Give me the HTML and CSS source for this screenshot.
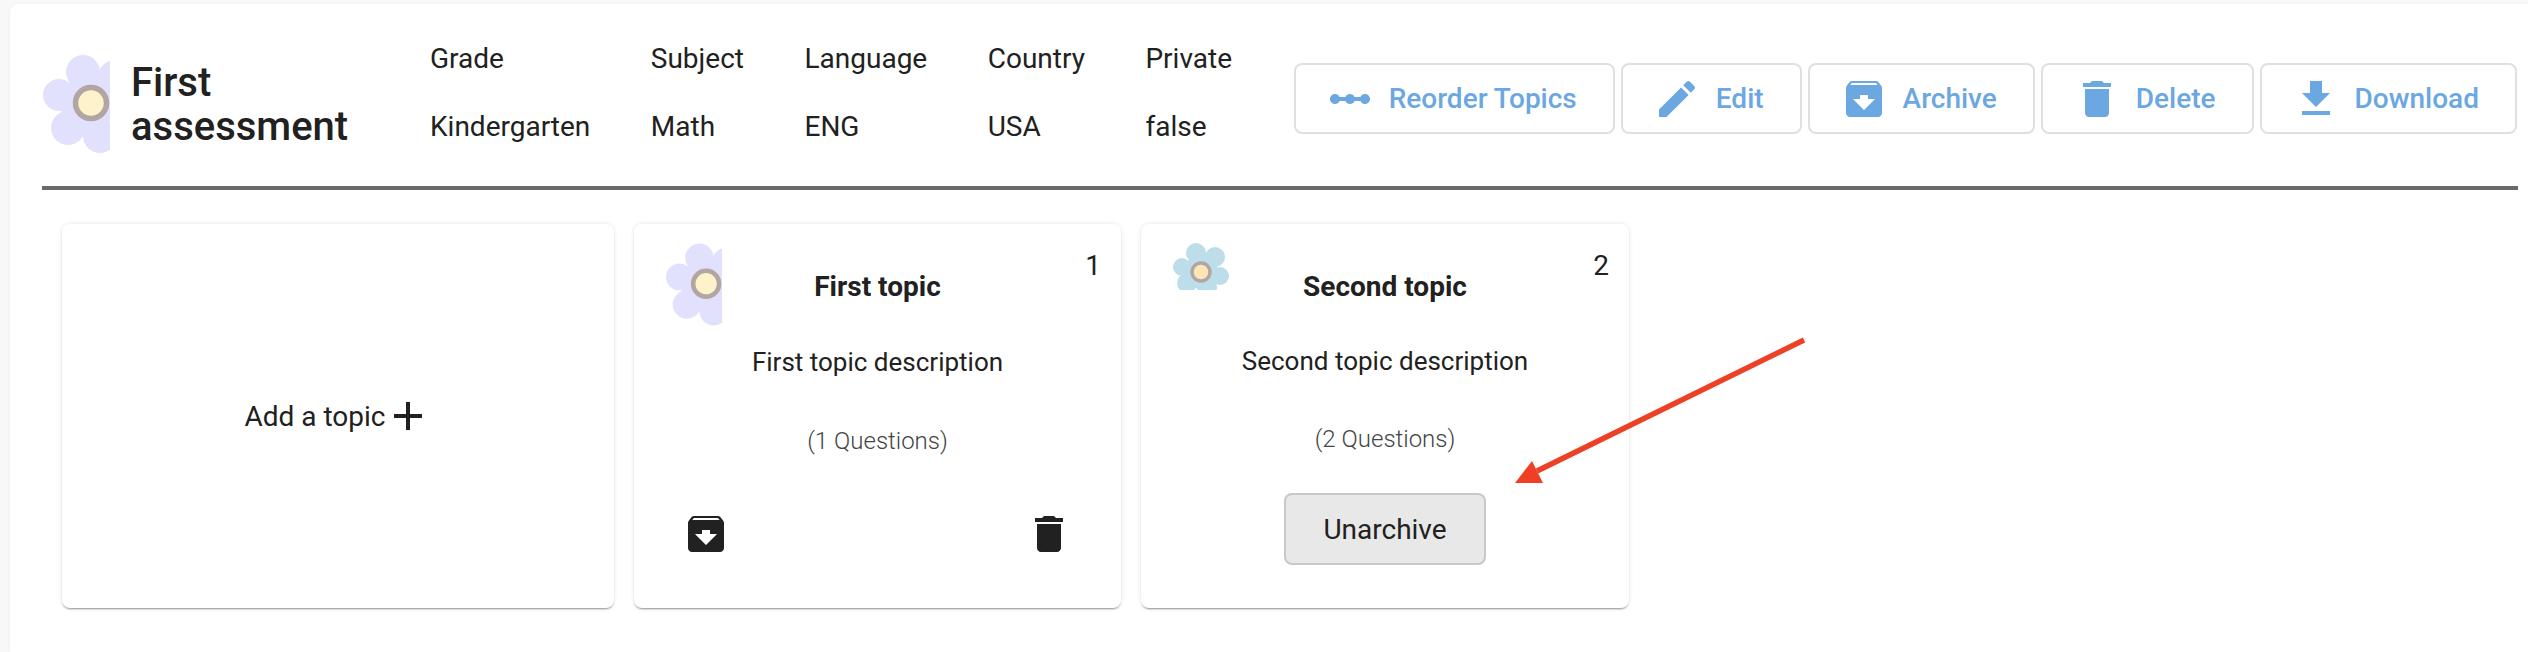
FILE: index.html
```html
<!DOCTYPE html>
<html lang="en">
<head>
    <meta charset="UTF-8">
    <title>First assessment</title>
    <link rel="stylesheet" href="styles.css">
</head>
<body>

    <svg class="sprites" width="0" height="0">
        <symbol id="flowerLilac" viewBox="0 0 67 98">
            <g fill="#e1e1fd">
                <circle cx="40" cy="17" r="17"/>
                <circle cx="16" cy="40" r="16"/>
                <circle cx="25" cy="73" r="17"/>
                <circle cx="57" cy="81" r="17"/>
                <circle cx="72" cy="22" r="17"/>
                <circle cx="45" cy="48" r="28"/>
            </g>
            <circle cx="48" cy="48" r="15.5" fill="#fdf2c9" stroke="#b1a6a2" stroke-width="5.5"/>
        </symbol>
    </svg>

    <div class="panel">
        <header class="header">
            <svg class="flower-big"><use href="#flowerLilac"/></svg>
            <h1 class="title">First assessment</h1>
            <div class="meta">
                <span>Grade</span><span>Subject</span><span>Language</span><span>Country</span><span>Private</span>
                <span>Kindergarten</span><span>Math</span><span>ENG</span><span>USA</span><span>false</span>
            </div>
            <div class="actions">
                <button class="btn">
                    <svg class="icon" viewBox="0 0 24 24"><path d="M19.5 9.5c-1.03 0-1.9.62-2.29 1.5h-2.92c-.39-.88-1.26-1.5-2.29-1.5s-1.9.62-2.29 1.5H6.79c-.39-.88-1.26-1.5-2.29-1.5C3.12 9.5 2 10.62 2 12s1.12 2.5 2.5 2.5c1.03 0 1.9-.62 2.29-1.5h2.92c.39.88 1.26 1.5 2.29 1.5s1.9-.62 2.29-1.5h2.92c.39.88 1.26 1.5 2.29 1.5 1.38 0 2.5-1.12 2.5-2.5s-1.12-2.5-2.5-2.5z"/></svg>
                    Reorder Topics
                </button>
                <button class="btn">
                    <svg class="icon" viewBox="0 0 24 24"><path d="M3 17.25V21h3.75L17.81 9.94l-3.75-3.75L3 17.25zM20.71 7.04c.39-.39.39-1.02 0-1.41l-2.34-2.34c-.39-.39-1.02-.39-1.41 0l-1.83 1.83 3.75 3.75 1.83-1.83z"/></svg>
                    Edit
                </button>
                <button class="btn">
                    <svg class="icon" viewBox="0 0 24 24"><path d="M20.54 5.23l-1.39-1.68C18.88 3.21 18.47 3 18 3H6c-.47 0-.88.21-1.16.55L3.46 5.23C3.17 5.57 3 6.02 3 6.5V19c0 1.1.9 2 2 2h14c1.1 0 2-.9 2-2V6.5c0-.48-.17-.93-.46-1.27zM12 17.5L6.5 12H10v-2h4v2h3.5L12 17.5zM5.12 5l.81-1h12l.94 1H5.12z"/></svg>
                    Archive
                </button>
                <button class="btn">
                    <svg class="icon" viewBox="0 0 24 24"><path d="M6 19c0 1.1.9 2 2 2h8c1.1 0 2-.9 2-2V7H6v12zM19 4h-3.5l-1-1h-5l-1 1H5v2h14V4z"/></svg>
                    Delete
                </button>
                <button class="btn">
                    <svg class="icon" viewBox="0 0 24 24"><path d="M19 9h-4V3H9v6H5l7 7 7-7zM5 18v2h14v-2H5z"/></svg>
                    Download
                </button>
            </div>
        </header>

        <div class="topics">
            <div class="card card-add">
                Add a topic
                <svg class="icon" viewBox="0 0 24 24"><path d="M19 13h-6v6h-2v-6H5v-2h6V5h2v6h6v2z"/></svg>
            </div>

            <div class="card">
                <svg class="flower-small"><use href="#flowerLilac"/></svg>
                <span class="card-number">1</span>
                <h2 class="card-title">First topic</h2>
                <p class="card-desc">First topic description</p>
                <p class="card-count">(1 Questions)</p>
                <div class="card-icons">
                    <svg class="icon" viewBox="0 0 24 24"><path d="M20.54 5.23l-1.39-1.68C18.88 3.21 18.47 3 18 3H6c-.47 0-.88.21-1.16.55L3.46 5.23C3.17 5.57 3 6.02 3 6.5V19c0 1.1.9 2 2 2h14c1.1 0 2-.9 2-2V6.5c0-.48-.17-.93-.46-1.27zM12 17.5L6.5 12H10v-2h4v2h3.5L12 17.5zM5.12 5l.81-1h12l.94 1H5.12z"/></svg>
                    <svg class="icon" viewBox="0 0 24 24"><path d="M6 19c0 1.1.9 2 2 2h8c1.1 0 2-.9 2-2V7H6v12zM19 4h-3.5l-1-1h-5l-1 1H5v2h14V4z"/></svg>
                </div>
            </div>

            <div class="card card-archived">
                <svg class="flower-blue" viewBox="0 0 56 47">
                    <g fill="#bcdde9">
                        <circle cx="23" cy="10" r="10"/>
                        <circle cx="9" cy="24" r="9"/>
                        <circle cx="42" cy="14" r="10"/>
                        <circle cx="47" cy="33" r="9"/>
                        <circle cx="14" cy="40" r="10"/>
                        <circle cx="34" cy="44" r="10"/>
                        <circle cx="28" cy="29" r="17"/>
                    </g>
                    <circle cx="28" cy="29" r="9" fill="#fce6b8" stroke="#b1a6a2" stroke-width="3.5"/>
                </svg>
                <span class="card-number">2</span>
                <h2 class="card-title">Second topic</h2>
                <p class="card-desc">Second topic description</p>
                <p class="card-count">(2 Questions)</p>
                <button class="btn-unarchive">Unarchive</button>
            </div>
        </div>
    </div>

    <!-- seta vermelha por cima do card -->
    <svg class="arrow" viewBox="0 0 300 143">
        <line x1="289" y1="0" x2="22" y2="131" stroke="#ee4024" stroke-width="5.5"/>
        <polygon points="0,143 17,121 28,143" fill="#ee4024"/>
    </svg>

</body>
</html>
```

FILE: styles.css
```css
body {
    margin: 0;
    background-color: #f8f8f8;
    font-family: 'Roboto', sans-serif;
    font-size: 28px;
    color: #212121;
    height: 652px;
    overflow: hidden;
    position: relative;
}

.sprites {
    display: block;
    height: 0;
}

.panel {
    margin: 4px 0 0 10px;
    height: 648px;
    background-color: #fff;
    border-radius: 8px 0 0 0;
    box-shadow: 0 0 3px rgba(0, 0, 0, 0.06);
    padding: 0 10px 0 32px;
    box-sizing: border-box;
}

.header {
    display: flex;
    align-items: flex-start;
    height: 182px;
    border-bottom: 4px solid #6a6a6a;
}

.flower-big {
    width: 67px;
    height: 98px;
    margin: 51px 0 0 1px;
    flex-shrink: 0;
}

.title {
    width: 278px;
    margin: 57px 0 0 21px;
    font-size: 40px;
    line-height: 44px;
    font-weight: 500;
    flex-shrink: 0;
}

.meta {
    display: grid;
    grid-template-columns: repeat(5, auto);
    column-gap: 60.5px;
    row-gap: 34px;
    margin: 38px 0 0 21px;
    line-height: 34px;
}

.actions {
    display: flex;
    gap: 6px;
    margin: 59px 1px 0 auto;
}

.btn {
    display: flex;
    align-items: center;
    gap: 15px;
    height: 71px;
    padding: 0 36px 0 30px;
    background-color: #fff;
    border: 2px solid #e0e0e0;
    border-radius: 8px;
    font-family: inherit;
    font-size: 28px;
    font-weight: 500;
    color: #6ba7e0;
}

.icon {
    width: 48px;
    height: 48px;
    fill: currentColor;
    flex-shrink: 0;
}

.topics {
    display: grid;
    grid-template-columns: 552px 487px 488px;
    gap: 20px;
    padding: 34px 0 0 20px;
}

.card {
    position: relative;
    height: 384px;
    box-sizing: border-box;
    padding-top: 43px;
    background-color: #fff;
    border-radius: 8px;
    box-shadow: 0 2px 2px -1px rgba(0, 0, 0, 0.4), 0 0 5px rgba(0, 0, 0, 0.1);
    text-align: center;
}

.card-add {
    display: flex;
    align-items: center;
    justify-content: center;
    padding: 0;
}

.card-add .icon {
    margin-left: -2px;
}

.flower-small {
    position: absolute;
    left: 32px;
    top: 19px;
    width: 56px;
    height: 83px;
}

.flower-blue {
    position: absolute;
    left: 32px;
    top: 19px;
    width: 56px;
    height: 47px;
}

.card-number {
    position: absolute;
    right: 20px;
    top: 25px;
}

.card-title {
    margin: 0;
    font-size: 28px;
    line-height: 40px;
    font-weight: 700;
}

.card-desc {
    margin: 35px 0 0;
    font-size: 26px;
    line-height: 40px;
}

.card-count {
    margin: 39px 0 0;
    font-size: 24px;
    line-height: 40px;
    font-weight: 300;
    color: #444;
}

.card-archived .card-desc {
    margin-top: 34px;
}

.card-archived .card-count {
    margin-top: 38px;
}

.card-icons {
    display: flex;
    justify-content: space-between;
    padding: 0 48px;
    margin-top: 49px;
}

.btn-unarchive {
    display: block;
    width: 202px;
    height: 72px;
    margin: 34px auto 0;
    background-color: #e8e8e8;
    border: 2px solid #c8c8c8;
    border-radius: 8px;
    font-family: inherit;
    font-size: 28px;
    color: #212121;
}

.arrow {
    position: absolute;
    left: 1515px;
    top: 340px;
    width: 300px;
    height: 143px;
    overflow: visible;
}
```
